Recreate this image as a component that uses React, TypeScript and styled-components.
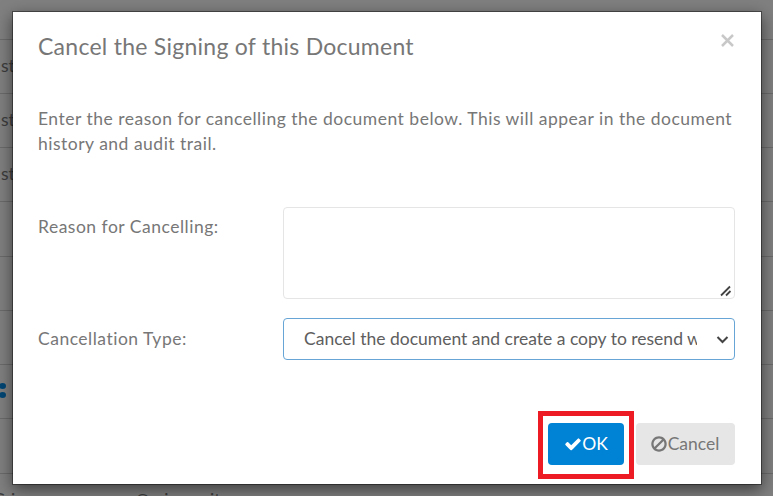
import React from "react";
import styled, { createGlobalStyle } from "styled-components";

const GlobalStyle = createGlobalStyle`
  *, *::before, *::after { box-sizing: border-box; }
  html, body { margin: 0; height: 100%; overflow: hidden; background: #808080; }
  body { font-family: Lato, sans-serif; font-size: 17.5px; color: #777; }
`;

const Page = styled.div`
  position: relative;
  width: 773px;
  height: 496px;
  overflow: hidden;
`;

const Table = styled.div`
  display: grid;
  grid-template-rows: 40px repeat(3, 54px) 55px 54px 54px 54px 55px 54px;
  color: #3d3d3d;
`;

const Row = styled.div`
  display: flex;
  align-items: center;
  height: 100%;
  padding: 0 0 3px 1px;
  border-bottom: 1px solid #6b6b6b;
  white-space: nowrap;
`;

const Contact = styled(Row)`
  align-items: flex-start;
  padding-top: 15px;
  gap: 78px;
  border: 0;
  margin-left: -8px;
`;

const Dots = styled.div`
  display: grid;
  gap: 3px;
  margin-left: -2px;
`;

const Dot = styled.span`
  width: 7px;
  height: 6px;
  border-radius: 50%;
  background: #004674;
`;

const Dialog = styled.section`
  position: absolute;
  left: 12px;
  top: 11px;
  width: 750px;
  height: 474px;
  padding: 0 26px 0 25px;
  background: #fff;
  background-clip: padding-box;
  border: 1px solid rgba(0, 0, 0, 0.4);
  box-shadow: 0 5px 15px rgba(0, 0, 0, 0.5);
  display: flex;
  flex-direction: column;
`;

const Header = styled.header`
  display: flex;
  justify-content: space-between;
  height: 94px;
  padding-top: 18px;
`;

const Title = styled.h4`
  margin: 0;
  font-size: 23px;
  line-height: 32px;
  font-weight: 400;
  letter-spacing: 0.26px;
`;

const Close = styled.button`
  display: flex;
  padding: 4px 1px;
  border: 0;
  background: none;
  height: 24px;
`;

const Message = styled.p`
  margin: 0;
  height: 101px;
  line-height: 25px;
  letter-spacing: 0.5px;
  white-space: nowrap;
`;

const Field = styled.div`
  display: grid;
  grid-template-columns: 245px 452px;
  align-items: start;
`;

const Label = styled.label`
  line-height: 40px;
  letter-spacing: 0.5px;
`;

const TypeLabel = styled(Label)`
  line-height: 42px;
`;

const ReasonBox = styled.div`
  position: relative;
  height: 92px;
  margin-bottom: 19px;
`;

const Reason = styled.textarea`
  display: block;
  width: 452px;
  height: 92px;
  border: 1px solid #e5e5e5;
  border-radius: 4px;
  resize: none;
  outline: 0;
`;

const Grip = styled.svg`
  position: absolute;
  right: 3px;
  bottom: 2px;
`;

const Select = styled.div`
  display: flex;
  align-items: center;
  justify-content: space-between;
  height: 42px;
  padding: 0 5px 0 20px;
  border: 1px solid #66a5d5;
  border-radius: 4px;
  color: #5e5e5e;
`;

const SelectText = styled.span`
  width: 393px;
  line-height: 26px;
  padding-bottom: 1px;
  overflow: hidden;
  white-space: nowrap;
`;

const Chevron = styled.svg`
  margin-top: 2px;
`;

const Footer = styled.footer`
  display: flex;
  align-items: flex-start;
  justify-content: flex-end;
  gap: 2px;
  margin-top: 51px;
`;

const Highlight = styled.div`
  padding: 7px 5px 9px;
  border: 5px solid #ed1c24;
`;

const Button = styled.button<{ $primary?: boolean }>`
  display: flex;
  align-items: center;
  justify-content: center;
  width: ${(p) => (p.$primary ? 76 : 99)}px;
  height: 42px;
  margin-top: ${(p) => (p.$primary ? 0 : 12)}px;
  padding: ${(p) => (p.$primary ? "0 0 1px" : "0 2px 1px 0")};
  border: 0;
  border-radius: 4px;
  font: 17.5px Lato, sans-serif;
  color: ${(p) => (p.$primary ? "#fff" : "#777")};
  background: ${(p) => (p.$primary ? "#0082d5" : "#e6e6e6")};
`;

const CHECK =
  "M1671 566q0 40-28 68l-724 724-136 136q-28 28-68 28t-68-28l-136-136-362-362q-28-28-28-68t28-68l136-136q28-28 68-28t68 28l294 295 656-657q28-28 68-28t68 28l136 136q28 28 28 68z";
const BAN =
  "M1440 893q0-161-87-295l-754 753q137 89 297 89 111 0 211.5-43.5t173.5-116.5 116-174.5 43-212.5zm-999 299l755-754q-135-91-300-91-148 0-273 73t-198 199-73 274q0 162 89 299zm1223-299q0 157-61 300t-163.5 246-245 164-298.5 61-298.5-61-245-164-163.5-246-61-300 61-299.5 163.5-245.5 245-164 298.5-61 298.5 61 245 164 163.5 245.5 61 299.5z";

export default function App() {
  return (
    <>
      <GlobalStyle />
      <Page>
        <Table>
          <Row />
          <Row>st</Row>
          <Row>st</Row>
          <Row>st</Row>
          <Row />
          <Row />
          <Row />
          <Row>
            <Dots>
              <Dot />
              <Dot />
            </Dots>
          </Row>
          <Row />
          <Contact>
            <span>Crimson</span>
            <span>@crimsonit</span>
          </Contact>
        </Table>
        <Dialog role="dialog">
          <Header>
            <Title>Cancel the Signing of this Document</Title>
            <Close aria-label="Close">
              <svg width="13" height="13" viewBox="0 0 13 13" stroke="#c8c8c8" strokeWidth="2.5">
                <path d="M1 1 12 12M12 1 1 12" />
              </svg>
            </Close>
          </Header>
          <Message>
            Enter the reason for cancelling the document below. This will appear in the document
            <br />
            history and audit trail.
          </Message>
          <Field>
            <Label htmlFor="reason">Reason for Cancelling:</Label>
            <ReasonBox>
              <Reason id="reason" />
              <Grip width="12" height="12" viewBox="0 0 12 12" stroke="#444" strokeWidth="1.8">
                <path d="M1 10.5 10 1.5M6 10.5 10.5 6" />
              </Grip>
            </ReasonBox>
          </Field>
          <Field>
            <TypeLabel>Cancellation Type:</TypeLabel>
            <Select role="combobox">
              <SelectText>Cancel the document and create a copy to resend with</SelectText>
              <Chevron width="13" height="8" viewBox="0 0 13 8" fill="none" stroke="#444" strokeWidth="2">
                <path d="m1.5 1 5 5 5-5" />
              </Chevron>
            </Select>
          </Field>
          <Footer>
            <Highlight>
              <Button $primary>
                <svg width="18" height="18" viewBox="0 0 1792 1792" fill="currentColor">
                  <path d={CHECK} />
                </svg>
                OK
              </Button>
            </Highlight>
            <Button>
              <svg width="18" height="18" viewBox="0 0 1792 1792" fill="currentColor">
                <path d={BAN} />
              </svg>
              Cancel
            </Button>
          </Footer>
        </Dialog>
      </Page>
    </>
  );
}
